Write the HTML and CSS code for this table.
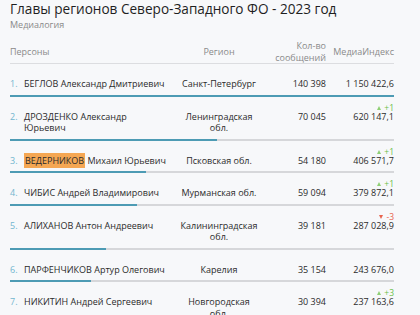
FILE: index.html
```html
<!DOCTYPE html>
<html lang="ru">
<head>
<meta charset="utf-8">
<link rel="stylesheet" href="styles.css">
</head>
<body>
<div class="page">
  <h1 class="title">Главы регионов Северо-Западного ФО - 2023 год</h1>
  <div class="source">Медиалогия</div>
  <div class="table">
    <div class="thead">
      <div class="th th-name">Персоны</div>
      <div class="th th-region">Регион</div>
      <div class="th th-count">Кол-во<br>сообщений</div>
      <div class="th th-mi">МедиаИндекс</div>
    </div>

    <div class="row">
      <div class="cells">
        <div class="cell name"><span class="num">1.</span><span class="nm">БЕГЛОВ Александр Дмитриевич</span></div>
        <div class="cell region">Санкт-Петербург</div>
        <div class="cell count">140 398</div>
        <div class="cell mi"><span class="val">1 150 422,6</span></div>
      </div>
      <div class="bar"><div class="fill" style="width:100%"></div></div>
    </div>

    <div class="row">
      <div class="cells">
        <div class="cell name"><span class="num">2.</span><span class="nm">ДРОЗДЕНКО Александр<br>Юрьевич</span></div>
        <div class="cell region">Ленинградская обл.</div>
        <div class="cell count">70 045</div>
        <div class="cell mi"><span class="val"><span class="chg up"><i class="tri"></i>+1</span>620 147,1</span></div>
      </div>
      <div class="bar"><div class="fill" style="width:53.9%"></div></div>
    </div>

    <div class="row">
      <div class="cells">
        <div class="cell name"><span class="num">3.</span><span class="nm"><mark class="hl">ВЕДЕРНИКОВ</mark> Михаил Юрьевич</span></div>
        <div class="cell region">Псковская обл.</div>
        <div class="cell count">54 180</div>
        <div class="cell mi"><span class="val"><span class="chg up"><i class="tri"></i>+1</span>406 571,7</span></div>
      </div>
      <div class="bar"><div class="fill" style="width:35.3%"></div></div>
    </div>

    <div class="row">
      <div class="cells">
        <div class="cell name"><span class="num">4.</span><span class="nm">ЧИБИС Андрей Владимирович</span></div>
        <div class="cell region">Мурманская обл.</div>
        <div class="cell count">59 094</div>
        <div class="cell mi"><span class="val"><span class="chg up"><i class="tri"></i>+1</span>379 872,1</span></div>
      </div>
      <div class="bar"><div class="fill" style="width:33.0%"></div></div>
    </div>

    <div class="row">
      <div class="cells">
        <div class="cell name"><span class="num">5.</span><span class="nm">АЛИХАНОВ Антон Андреевич</span></div>
        <div class="cell region">Калининградская обл.</div>
        <div class="cell count">39 181</div>
        <div class="cell mi"><span class="val"><span class="chg down"><i class="tri"></i>-3</span>287 028,9</span></div>
      </div>
      <div class="bar"><div class="fill" style="width:24.9%"></div></div>
    </div>

    <div class="row">
      <div class="cells">
        <div class="cell name"><span class="num">6.</span><span class="nm">ПАРФЕНЧИКОВ Артур Олегович</span></div>
        <div class="cell region">Карелия</div>
        <div class="cell count">35 154</div>
        <div class="cell mi"><span class="val">243 676,0</span></div>
      </div>
      <div class="bar"><div class="fill" style="width:21.2%"></div></div>
    </div>

    <div class="row">
      <div class="cells">
        <div class="cell name"><span class="num">7.</span><span class="nm">НИКИТИН Андрей Сергеевич</span></div>
        <div class="cell region">Новгородская обл.</div>
        <div class="cell count">30 394</div>
        <div class="cell mi"><span class="val"><span class="chg up"><i class="tri"></i>+3</span>237 163,6</span></div>
      </div>
      <div class="bar"><div class="fill" style="width:20.6%"></div></div>
    </div>
  </div>
</div>
</body>
</html>
```

FILE: styles.css
```css
html, body {
  margin: 0;
  padding: 0;
  background: #f7f8fa;
}
body {
  font-family: "Open Sans", "Noto Sans", "DejaVu Sans", sans-serif;
  color: #2b2b2b;
}
.page {
  padding: 0 26px 0 10px;
}
.title {
  margin: 0;
  font-size: 13.6px;
  line-height: 18px;
  font-weight: 500;
  color: #1f1f1f;
  white-space: nowrap;
}
.source {
  font-size: 9px;
  line-height: 11px;
  margin-top: 1px;
  color: #8a8a8a;
}
.table {
  margin-top: 10px;
  width: 384px;
}
.thead, .cells {
  display: grid;
  grid-template-columns: 164px 90px 62px 68px;
}
.thead {
  align-items: center;
  border-bottom: 1px solid #dcdde0;
  font-size: 9px;
  line-height: 11.5px;
  color: #8a8a8a;
}
.th-region { text-align: center; }
.th-count, .th-mi { text-align: right; }
.row {
  padding-top: 14px;
}
.cells {
  align-items: start;
  font-size: 9px;
  line-height: 11.5px;
  padding-bottom: 5px;
}
.name {
  display: flex;
}
.num {
  width: 14px;
  flex: none;
  color: #72b6cf;
}
.nm {
  white-space: nowrap;
}
.hl {
  background: #f5a753;
  color: #2b2b2b;
  padding: 1px 1px;
}
.region {
  text-align: center;
  padding: 0 6px;
}
.count, .mi {
  text-align: right;
}
.val {
  position: relative;
  display: inline-block;
}
.chg {
  position: absolute;
  right: 0;
  bottom: 100%;
  margin-bottom: -1px;
  font-size: 8.5px;
  line-height: 8px;
  white-space: nowrap;
  display: flex;
  align-items: center;
  gap: 3px;
}
.chg.up { color: #6dbf4b; }
.chg.down { color: #e8634e; }
.tri {
  width: 0;
  height: 0;
  border-left: 2.5px solid transparent;
  border-right: 2.5px solid transparent;
}
.up .tri { border-bottom: 4px solid #8fcf74; }
.down .tri { border-top: 4px solid #e8634e; }
.bar {
  height: 2px;
  background: #d6d7da;
}
.fill {
  height: 100%;
  background: #4d9bb4;
}
```
